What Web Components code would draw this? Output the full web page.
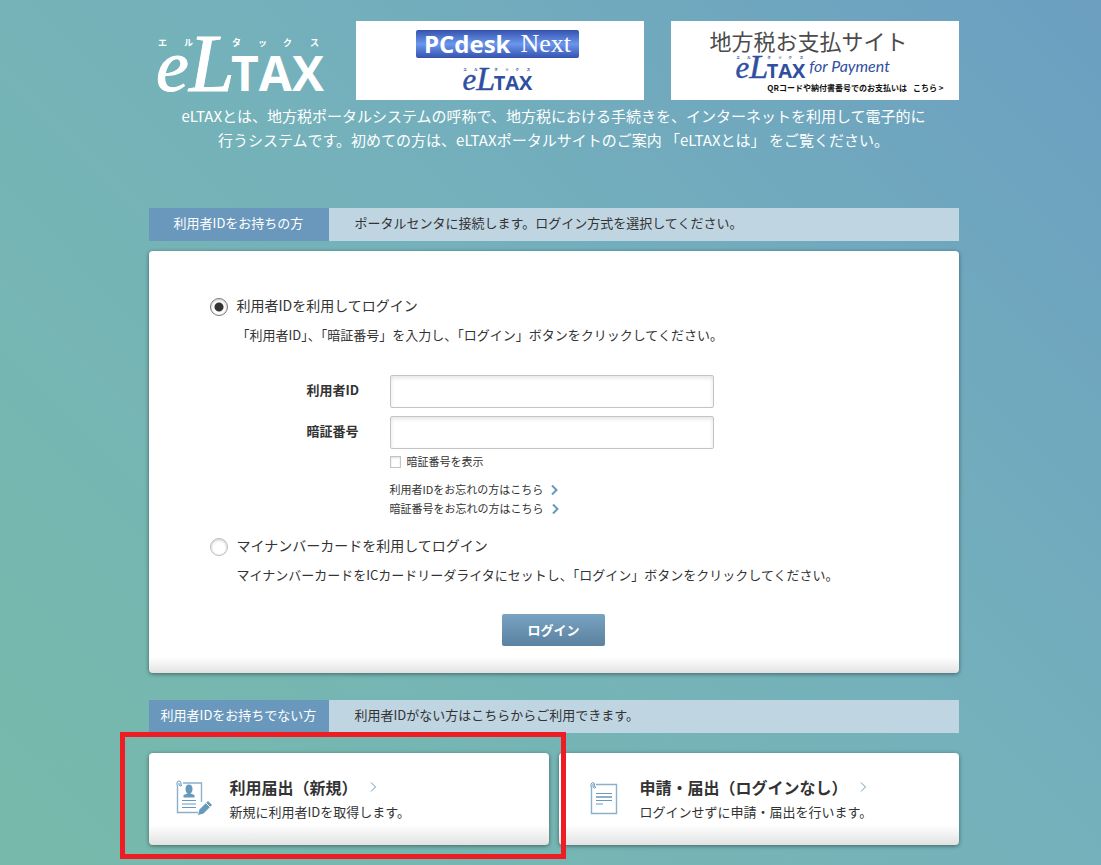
<!DOCTYPE html>
<html lang="ja">
<head>
<meta charset="utf-8">
<title>eLTAX PCdesk Next</title>
<meta name="viewport" content="width=device-width, initial-scale=1">
<style>
html { min-height: 100%; background: linear-gradient(45deg, #77baaa 0%, #74b1bb 55%, #6c9fc1 100%); }
body { margin: 0; color: #333; font: 13px/20px "Noto Sans CJK JP", sans-serif; }
</style>
</head>
<body>
<portal-page></portal-page>

<script>
const define = (name, html, setup) => {
  const template = document.createElement('template');
  template.innerHTML = html;
  customElements.define(name, class extends HTMLElement {
    constructor() {
      super();
      this.attachShadow({ mode: 'open' }).append(template.content.cloneNode(true));
      if (setup) setup(this, this.shadowRoot);
    }
  });
};

define('eltax-logo', `
<style>
:host { display: block; }
svg { display: block; width: 100%; height: auto; overflow: visible; fill: currentColor; }
.e { font: italic 74px "Liberation Serif", serif; stroke: currentColor; stroke-width: 1; }
.l { font: italic 82px "Liberation Serif", serif; stroke: currentColor; stroke-width: 1; }
.t { font: bold 48px "Open Sans", "Noto Sans", sans-serif; }
.k { font: bold 9px "Noto Sans CJK JP", sans-serif; }
</style>
<svg viewBox="0 0 168 60" role="img" aria-label="eLTAX">
  <g class="k"><text x="3" y="10">エ</text><text x="29" y="10">ル</text><text x="77" y="10">タ</text><text x="103" y="10">ッ</text><text x="128" y="10">ク</text><text x="155" y="10">ス</text></g>
  <text class="e" x="1" y="55">e</text>
  <text class="l" x="34" y="55">L</text>
  <text class="t" x="76" y="55">TAX</text>
</svg>`);

define('banner-link', `
<style>
:host { display: block; width: 288px; }
a { display: flex; flex-direction: column; align-items: center; box-sizing: border-box; height: 79px; background: #fff; color: #2f4f9f; text-decoration: none; }
</style>
<a href="#"><slot></slot></a>`);

define('pcdesk-banner', `
<style>
:host { display: block; }
.plate { display: flex; justify-content: center; align-items: center; gap: 10px; margin: 9px 4px 0 0; width: 163px; height: 28px; border-radius: 2px; background: linear-gradient(#3552ad, #6a96ee 50%, #3552ad); color: #fff; }
b { font: bold 24px/28px "Open Sans", sans-serif; }
span { font: 26px/28px "Liberation Serif", serif; }
eltax-logo { width: 70px; margin: 9px 6px 0 0; }
</style>
<banner-link><div class="plate"><b>PCdesk</b><span>Next</span></div><eltax-logo></eltax-logo></banner-link>`);

define('payment-banner', `
<style>
:host { display: block; }
.name { margin-top: 6px; font-size: 22px; line-height: 26px; color: #4b4b4b; padding-right: 12px; }
.row { display: flex; align-items: center; gap: 4px; height: 26px; padding-right: 4px; }
eltax-logo { width: 70px; margin-top: 2px; }
i { font: italic 16px/24px "Lato", sans-serif; }
small { display: flex; gap: 6px; align-self: flex-end; margin: 1px 15px 0 0; font-size: 8px; line-height: 16px; font-weight: bold; color: #111; }
</style>
<banner-link>
  <div class="name">地方税お支払サイト</div>
  <div class="row"><eltax-logo></eltax-logo><i>for Payment</i></div>
  <small><span>QRコードや納付書番号でのお支払いは</span><span>こちら &gt;</span></small>
</banner-link>`);

define('site-header', `
<style>
:host { display: block; color: #fff; }
.top { display: flex; justify-content: space-between; }
.brand { width: 168px; margin: 15px 0 0 6px; }
.banners { display: flex; gap: 27px; }
p { margin: 4px 0 0; font-size: 15px; line-height: 24px; text-align: center; }
a { color: inherit; text-decoration: none; }
</style>
<div class="top">
  <eltax-logo class="brand"></eltax-logo>
  <div class="banners"><pcdesk-banner></pcdesk-banner><payment-banner></payment-banner></div>
</div>
<p>eLTAXとは、地方税ポータルシステムの呼称で、地方税における手続きを、インターネットを利用して電子的に<br>行うシステムです。初めての方は、eLTAXポータルサイトのご案内 <a href="#">「eLTAXとは」</a> をご覧ください。</p>`);

define('section-bar', `
<style>
:host { display: flex; min-height: 33px; line-height: 30px; background: #c0d5e2; }
h2 { flex: 0 0 180px; margin: 0; background: #6998bc; color: #fff; font-size: 13px; font-weight: normal; text-align: center; }
p { margin: 0; padding-left: 26px; }
</style>
<h2><slot name="title"></slot></h2><p><slot></slot></p>`);

define('chevron-icon', `
<style>
:host { display: inline-block; width: 7px; height: 12px; }
svg { display: block; width: 100%; height: 100%; fill: none; stroke: #669abe; stroke-width: var(--stroke, 2); }
</style>
<svg viewBox="0 0 7 12" aria-hidden="true"><path d="M1 1.5 5.5 6 1 10.5"/></svg>`);

define('login-panel', `
<style>
:host { display: block; box-sizing: border-box; padding: 44px 60px 27px; border-radius: 4px; background: linear-gradient(to top, #e2e2e2 0, #fff 16px); box-shadow: 0 1px 4px rgba(0,0,0,.45); }
.choice { display: grid; grid-template-columns: 28px 1fr; align-items: center; }
.choice label { font-size: 14px; line-height: 20px; padding-bottom: 4px; }
input { appearance: none; box-sizing: border-box; margin: 0; border: 1px solid #bbb; background: #fff; font: inherit; }
input[type=radio] { width: 18px; height: 18px; border-radius: 50%; box-shadow: inset 0 1px 3px #ccc; margin-left: 1px; }
input[type=radio]:checked { border-color: #777; background: radial-gradient(circle, #333 4px, transparent 5px); }
p { margin: 6px 0 0 28px; }
.fields { display: grid; grid-template-columns: 83px 324px; row-gap: 8px; align-items: center; margin: 30px 0 0 98px; }
.fields > label { font-weight: bold; padding-bottom: 4px; }
.field { width: 100%; height: 33px; padding: 0 8px; border-radius: 2px; border-color: #c4c4c4; box-shadow: inset 0 2px 4px #e4e4e4; }
.extra { margin-left: 181px; font-size: 11px; line-height: 19px; }
.show { display: flex; align-items: center; gap: 6px; margin-top: 3px; }
input[type=checkbox] { width: 11px; height: 12px; border-color: #c4c4c4; box-shadow: inset 0 1px 2px #ddd; }
input[type=checkbox]:checked { background: #669abe; }
.links { margin: 9px 0 17px; }
.links a { display: flex; width: max-content; align-items: center; gap: 8px; color: inherit; text-decoration: none; }
button { display: block; width: 103px; height: 32px; margin: 29px auto 0; border: 0; border-radius: 2px; background: linear-gradient(#78a3c1, #5b82a0); color: #fff; font: bold 13px/30px "Noto Sans CJK JP", sans-serif; }
</style>
<form>
  <div class="choice"><input type="radio" id="by-id" name="method" checked><label for="by-id">利用者IDを利用してログイン</label></div>
  <p>「利用者ID」、「暗証番号」を入力し、「ログイン」ボタンをクリックしてください。</p>
  <div class="fields">
    <label for="user">利用者ID</label><input class="field" id="user" type="text">
    <label for="pass">暗証番号</label><input class="field" id="pass" type="password">
  </div>
  <div class="extra">
    <div class="show"><input type="checkbox" id="show"><label for="show">暗証番号を表示</label></div>
    <div class="links">
      <a href="#">利用者IDをお忘れの方はこちら<chevron-icon></chevron-icon></a>
      <a href="#">暗証番号をお忘れの方はこちら<chevron-icon></chevron-icon></a>
    </div>
  </div>
  <div class="choice"><input type="radio" id="by-card" name="method"><label for="by-card">マイナンバーカードを利用してログイン</label></div>
  <p>マイナンバーカードをICカードリーダライタにセットし、「ログイン」ボタンをクリックしてください。</p>
  <button type="button">ログイン</button>
</form>`, (host, root) => {
  root.getElementById('show').addEventListener('change', e => {
    root.getElementById('pass').type = e.target.checked ? 'text' : 'password';
  });
});

define('action-card', `
<style>
:host { display: block; flex: 1; }
a { display: flex; gap: 18px; box-sizing: border-box; height: 92px; padding: 21px 27px 0; border-radius: 4px; background: linear-gradient(to top, #e2e2e2 0, #fff 20px); box-shadow: 0 1px 4px rgba(0,0,0,.45); color: inherit; text-decoration: none; }
h3 { display: flex; align-items: center; gap: 12px; margin: 0; font-size: 16px; line-height: 26px; }
p { margin: 1px 0 0; line-height: 22px; }
chevron-icon { --stroke: 1; }
.icon { flex: 0 0 36px; padding-top: 6px; }
</style>
<a href="#"><div class="icon"><slot name="icon"></slot></div>
<div><h3><slot name="title"></slot><chevron-icon></chevron-icon></h3><p><slot></slot></p></div></a>`);

define('register-icon', `
<style>:host { display: block; } svg { display: block; width: 36px; height: 36px; }</style>
<svg viewBox="0 0 36 36" fill="none" stroke="#8ab0cc" aria-hidden="true">
  <path d="M7 3h18.500v19M1.500 5v27.500H22" stroke-width="1.400"/>
  <path d="M1 5V3q0-2 2-2t2 2v3M3 3v2q2 2 3 0" stroke="#6799bd"/>
  <ellipse cx="13" cy="9" rx="3.500" ry="4.500" fill="#6799bd" stroke="none"/>
  <path d="M11.500 11h3v2.500l4 1.500v2.500h-11V15l4-1.500z" fill="#6799bd" stroke="none"/>
  <path d="M6 20.500h14M6 24h14M6 27.500h14" stroke="#6799bd"/>
  <path d="m22 35 1.500-5.500 8.500-8.500 4 4-8.500 8.500z" fill="#6799bd" stroke="none"/>
  <path d="m30 23 4 4" stroke="#fff"/>
</svg>`);

define('document-icon', `
<style>:host { display: block; } svg { display: block; width: 36px; height: 36px; }</style>
<svg viewBox="0 0 36 36" fill="none" stroke="#8ab0cc" aria-hidden="true">
  <path d="M10 4.500h20.500v29H5.500v-27" stroke-width="1.400"/>
  <path d="M5 7V4q1-2 3-1l1 4M7 4v3q2 2 3 0" stroke="#6799bd"/>
  <path d="M10 13.500h16M10 20.500h16M10 24h7" stroke="#6799bd"/><path d="M10 17h16" stroke-width="2"/>
</svg>`);

define('highlight-frame', `
<style>
:host { display: block; position: relative; flex: 1; }
.frame { position: absolute; inset: -21px -17px -14px -29px; border: 5px solid #ee1c23; pointer-events: none; z-index: 1; }
</style>
<slot></slot><div class="frame"></div>`);

define('portal-page', `
<style>
:host { display: block; padding: 21px 16px 20px; }
main { max-width: 810px; margin: 0 auto; padding-left: 6px; }
section-bar { margin-top: 56px; }
login-panel { margin: 10px 0 27px; }
section-bar.second { margin-top: 0; }
.cards { display: flex; gap: 10px; margin-top: 20px; }
</style>
<main>
  <site-header></site-header>
  <section-bar><span slot="title">利用者IDをお持ちの方</span>ポータルセンタに接続します。ログイン方式を選択してください。</section-bar>
  <login-panel></login-panel>
  <section-bar class="second"><span slot="title">利用者IDをお持ちでない方</span>利用者IDがない方はこちらからご利用できます。</section-bar>
  <div class="cards">
    <highlight-frame><action-card><register-icon slot="icon"></register-icon><span slot="title">利用届出（新規）</span>新規に利用者IDを取得します。</action-card></highlight-frame>
    <action-card><document-icon slot="icon"></document-icon><span slot="title">申請・届出（ログインなし）</span>ログインせずに申請・届出を行います。</action-card>
  </div>
</main>`);
</script>
</body>
</html>
